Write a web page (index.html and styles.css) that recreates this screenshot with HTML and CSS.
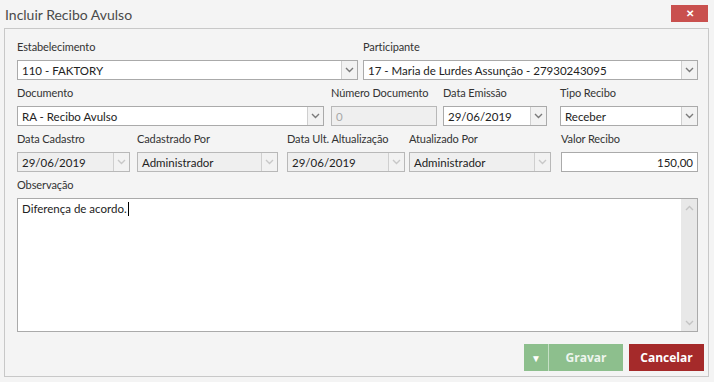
FILE: index.html
```html
<!DOCTYPE html>
<html lang="pt-BR">

<head>
    <meta charset="UTF-8">
    <meta name="viewport" content="width=device-width, initial-scale=1.0">
    <title>Incluir Recibo Avulso</title>
    <link rel="stylesheet" href="styles.css">
</head>

<body>
    <div class="titlebar">
        <span class="title">Incluir Recibo Avulso</span>
        <button class="close-button">&#x2715;</button>
    </div>

    <div class="panel">
        <div class="row">
            <div class="field w-estab">
                <label>Estabelecimento</label>
                <div class="select">
                    <span class="value">110 - FAKTORY</span>
                    <span class="arrow"><svg width="9" height="6" viewBox="0 0 9 6"><path d="M1 1 L4.5 4.5 L8 1" /></svg></span>
                </div>
            </div>
            <div class="field w-part">
                <label>Participante</label>
                <div class="select">
                    <span class="value">17 - Maria de Lurdes Assunção - 27930243095</span>
                    <span class="arrow"><svg width="9" height="6" viewBox="0 0 9 6"><path d="M1 1 L4.5 4.5 L8 1" /></svg></span>
                </div>
            </div>
        </div>

        <div class="row">
            <div class="field w-doc">
                <label>Documento</label>
                <div class="select">
                    <span class="value">RA - Recibo Avulso</span>
                    <span class="arrow"><svg width="9" height="6" viewBox="0 0 9 6"><path d="M1 1 L4.5 4.5 L8 1" /></svg></span>
                </div>
            </div>
            <div class="field w-num">
                <label>Número Documento</label>
                <div class="input disabled muted"><span class="value">0</span></div>
            </div>
            <div class="field w-emissao">
                <label>Data Emissão</label>
                <div class="select">
                    <span class="value">29/06/2019</span>
                    <span class="arrow"><svg width="9" height="6" viewBox="0 0 9 6"><path d="M1 1 L4.5 4.5 L8 1" /></svg></span>
                </div>
            </div>
            <div class="field w-tipo">
                <label>Tipo Recibo</label>
                <div class="select">
                    <span class="value">Receber</span>
                    <span class="arrow"><svg width="9" height="6" viewBox="0 0 9 6"><path d="M1 1 L4.5 4.5 L8 1" /></svg></span>
                </div>
            </div>
        </div>

        <div class="row">
            <div class="field w-cad">
                <label>Data Cadastro</label>
                <div class="select disabled">
                    <span class="value">29/06/2019</span>
                    <span class="arrow"><svg width="9" height="6" viewBox="0 0 9 6"><path d="M1 1 L4.5 4.5 L8 1" /></svg></span>
                </div>
            </div>
            <div class="field w-cadpor">
                <label>Cadastrado Por</label>
                <div class="select disabled">
                    <span class="value">Administrador</span>
                    <span class="arrow"><svg width="9" height="6" viewBox="0 0 9 6"><path d="M1 1 L4.5 4.5 L8 1" /></svg></span>
                </div>
            </div>
            <div class="field w-ult">
                <label>Data Ult. Altualização</label>
                <div class="select disabled">
                    <span class="value">29/06/2019</span>
                    <span class="arrow"><svg width="9" height="6" viewBox="0 0 9 6"><path d="M1 1 L4.5 4.5 L8 1" /></svg></span>
                </div>
            </div>
            <div class="field w-atupor">
                <label>Atualizado Por</label>
                <div class="select disabled">
                    <span class="value">Administrador</span>
                    <span class="arrow"><svg width="9" height="6" viewBox="0 0 9 6"><path d="M1 1 L4.5 4.5 L8 1" /></svg></span>
                </div>
            </div>
            <div class="field w-valor">
                <label>Valor Recibo</label>
                <div class="input"><span class="value right">150,00</span></div>
            </div>
        </div>

        <div class="field w-obs">
            <label>Observação</label>
            <div class="textarea">
                <div class="text">Diferença de acordo.<span class="caret"></span></div>
                <div class="scrollbar">
                    <svg width="9" height="6" viewBox="0 0 9 6"><path d="M1 5 L4.5 1.5 L8 5" /></svg>
                    <svg width="9" height="6" viewBox="0 0 9 6"><path d="M1 1 L4.5 4.5 L8 1" /></svg>
                </div>
            </div>
        </div>

        <div class="buttons">
            <div class="save-group">
                <button class="save-toggle">&#9660;</button>
                <button class="save-button">Gravar</button>
            </div>
            <button class="cancel-button">Cancelar</button>
        </div>
    </div>
</body>

</html>
```

FILE: styles.css
```css
body {
    font-family: 'Lato', 'Liberation Sans', sans-serif;
    font-size: 11.5px;
    color: #333;
    background-color: #f4f4f4;
    margin: 0;
}

.titlebar {
    height: 28px;
    display: flex;
    justify-content: space-between;
    align-items: flex-start;
}

.title {
    font-size: 14px;
    color: #4a4a4a;
    padding: 6px 0 0 5px;
}

.close-button {
    width: 37px;
    height: 17px;
    margin: 5px 6px 0 0;
    border: none;
    background-color: #c9504e;
    color: #fff;
    font-size: 10px;
    font-weight: bold;
    padding: 0;
    line-height: 17px;
}

.panel {
    margin: 0 5px 0 4px;
    border: 1px solid #c8c8c8;
    padding: 11px 4px 5px 12px;
}

.row {
    display: flex;
    margin-bottom: 6px;
}

.field {
    display: flex;
    flex-direction: column;
}

.field label {
    height: 14px;
    line-height: 14px;
    margin-bottom: 6px;
    color: #333;
    font-size: 11px;
    letter-spacing: -0.1px;
    white-space: nowrap;
}

.select,
.input {
    height: 20px;
    box-sizing: border-box;
    border: 1px solid #aaaaaa;
    background-color: #fff;
    display: flex;
    align-items: center;
    color: #222;
}

.value {
    flex: 1;
    padding-left: 4px;
    white-space: nowrap;
    overflow: hidden;
}

.value.right {
    text-align: right;
    padding-right: 4px;
}

.arrow {
    width: 15px;
    height: 100%;
    border-left: 1px solid #cfcfcf;
    background-color: #f2f2f2;
    display: flex;
    align-items: center;
    justify-content: center;
}

.arrow path,
.scrollbar path {
    fill: none;
    stroke: #7a7a7a;
    stroke-width: 1.4;
}

.disabled {
    background-color: #efefef;
    border-color: #b8b8b8;
}

.disabled .arrow path {
    stroke: #c8c8c8;
}

.muted {
    color: #a8a8a8;
}

.w-estab { width: 341px; margin-right: 5px; }
.w-part { width: 335px; }

.w-doc { width: 307px; margin-right: 7px; }
.w-num { width: 106px; margin-right: 6px; }
.w-emissao { width: 104px; margin-right: 13px; }
.w-tipo { width: 138px; }

.w-cad { width: 113px; margin-right: 7px; }
.w-cadpor { width: 141px; margin-right: 9px; }
.w-ult { width: 118px; margin-right: 4px; }
.w-atupor { width: 142px; margin-right: 10px; }
.w-valor { width: 137px; }

.w-obs { width: 681px; }

.textarea {
    height: 134px;
    box-sizing: border-box;
    border: 1px solid #aaaaaa;
    background-color: #fff;
    display: flex;
}

.textarea .text {
    flex: 1;
    padding: 3px 4px;
    color: #222;
}

.caret {
    display: inline-block;
    width: 1px;
    height: 14px;
    margin-left: 1px;
    background-color: #000;
    vertical-align: -3px;
}

.scrollbar {
    width: 16px;
    background-color: #e8e8e8;
    display: flex;
    flex-direction: column;
    justify-content: space-between;
    align-items: center;
    padding: 6px 0 5px;
}

.scrollbar path {
    stroke: #c4c4c4;
}

.buttons {
    display: flex;
    justify-content: flex-end;
    margin-top: 12px;
}

.buttons button {
    height: 27px;
    border: none;
    padding: 0;
    color: white;
    font-family: 'Open Sans', 'Liberation Sans', sans-serif;
    font-size: 12px;
    font-weight: bold;
}

.save-group {
    display: flex;
    margin-right: 6px;
}

.buttons .save-toggle {
    width: 25px;
    background-color: #8dbf8d;
    border-right: 1px solid #c6e0c6;
    font-size: 10px;
}

.buttons .save-button {
    width: 74px;
    background-color: #8dbf8d;
    color: #eef5ee;
}

.buttons .cancel-button {
    width: 75px;
    background-color: #a52a2a;
}
```
